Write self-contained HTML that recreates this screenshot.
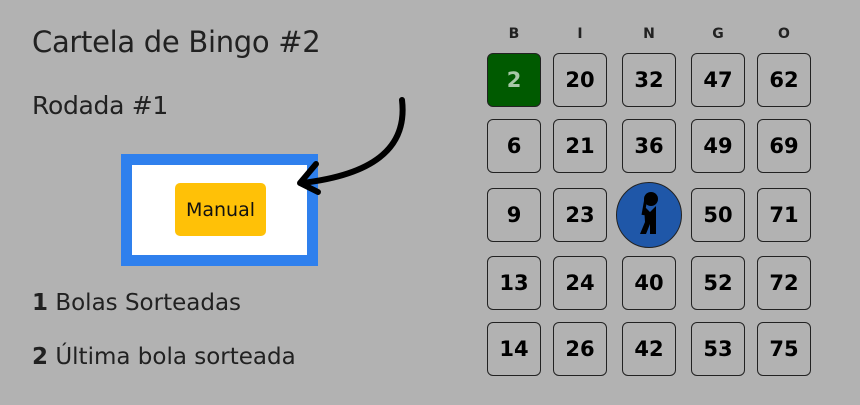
<!DOCTYPE html>
<html><head><style>
body{margin:0;width:860px;height:405px;background:#b2b2b2;font-family:"DejaVu Sans","Liberation Sans",sans-serif;color:#212121;position:relative;overflow:hidden}
.a{position:absolute;white-space:nowrap}
.c{position:absolute;width:52px;height:52px;border:1px solid #222;border-radius:6px;display:flex;align-items:center;justify-content:center;font-weight:bold;font-size:21px;color:#000;box-sizing:content-box}
.l{position:absolute;top:26px;width:54px;text-align:center;font-weight:bold;font-size:14px;color:#222}
</style></head><body>
<div class="a" style="left:32px;top:25px;font-size:29px;letter-spacing:-0.3px">Cartela de Bingo #2</div>
<div class="a" style="left:32px;top:91px;font-size:25px;letter-spacing:-0.3px">Rodada #1</div>
<div class="a" style="left:121px;top:154px;width:175px;height:90px;border:11px solid #2f80ed;background:#fff"></div>
<div class="a" style="left:175px;top:183px;width:91px;height:53px;background:#ffc107;border-radius:5px;display:flex;align-items:center;justify-content:center;font-size:19px;color:#111">Manual</div>
<svg class="a" style="left:280px;top:90px" width="140" height="120"><path d="M122 10 C128 60 90 85 22 93" fill="none" stroke="#000" stroke-width="6" stroke-linecap="round"/><path d="M36 74 L20 93 L38 102" fill="none" stroke="#000" stroke-width="6" stroke-linecap="round" stroke-linejoin="round"/></svg>
<div class="a" style="left:32px;top:290px;font-size:23px"><b>1</b> Bolas Sorteadas</div>
<div class="a" style="left:32px;top:344px;font-size:23px"><b>2</b> Última bola sorteada</div>

<div class="l" style="left:487px">B</div><div class="l" style="left:553px">I</div><div class="l" style="left:622px">N</div><div class="l" style="left:691px">G</div><div class="l" style="left:757px">O</div>

<div class="c" style="left:487px;top:53px;background:#005a00;color:#a8c8a8">2</div>
<div class="c" style="left:553px;top:53px">20</div>
<div class="c" style="left:622px;top:53px">32</div>
<div class="c" style="left:691px;top:53px">47</div>
<div class="c" style="left:757px;top:53px">62</div>

<div class="c" style="left:487px;top:119px">6</div>
<div class="c" style="left:553px;top:119px">21</div>
<div class="c" style="left:622px;top:119px">36</div>
<div class="c" style="left:691px;top:119px">49</div>
<div class="c" style="left:757px;top:119px">69</div>

<div class="c" style="left:487px;top:188px">9</div>
<div class="c" style="left:553px;top:188px">23</div>
<div class="a" style="left:616px;top:182px;width:64px;height:64px;border:1px solid #222;border-radius:50%;background:#1f57a8"></div>
<svg class="a" style="left:630px;top:190px" width="40" height="50"><circle cx="21" cy="9" r="7" fill="#000"/><path d="M14 16 L20 22 L26 16 L26 44 L20 44 L20 34 L16 44 L10 44 L15 32 Z" fill="#000"/><path d="M16 8 L13 25" stroke="#000" stroke-width="3"/></svg>
<div class="c" style="left:691px;top:188px">50</div>
<div class="c" style="left:757px;top:188px">71</div>

<div class="c" style="left:487px;top:256px">13</div>
<div class="c" style="left:553px;top:256px">24</div>
<div class="c" style="left:622px;top:256px">40</div>
<div class="c" style="left:691px;top:256px">52</div>
<div class="c" style="left:757px;top:256px">72</div>

<div class="c" style="left:487px;top:322px">14</div>
<div class="c" style="left:553px;top:322px">26</div>
<div class="c" style="left:622px;top:322px">42</div>
<div class="c" style="left:691px;top:322px">53</div>
<div class="c" style="left:757px;top:322px">75</div>
</body></html>
